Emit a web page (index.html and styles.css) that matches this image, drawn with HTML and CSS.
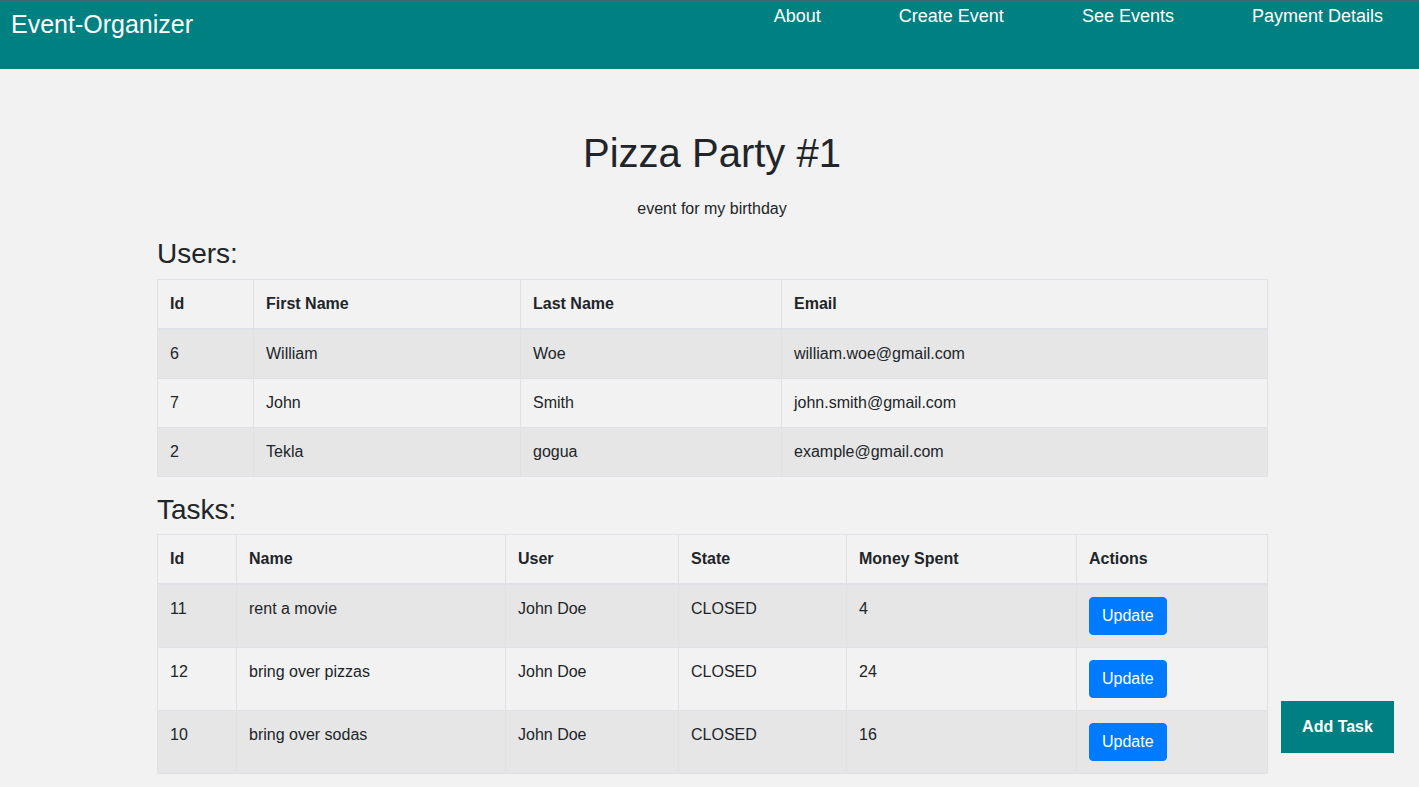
FILE: index.html
```html
<!DOCTYPE html>
<html lang="en">
<head>
<meta charset="utf-8">
<title>Event-Organizer</title>
<link rel="stylesheet" href="styles.css">
</head>
<body>
<header class="navbar">
  <div class="brand">Event-Organizer</div>
  <nav class="nav">
    <a class="nav-link" href="#">About</a>
    <a class="nav-link" href="#">Create Event</a>
    <a class="nav-link" href="#">See Events</a>
    <a class="nav-link" href="#">Payment Details</a>
  </nav>
</header>
<main class="container">
  <h1 class="title">Pizza Party #1</h1>
  <p class="subtitle">event for my birthday</p>

  <h3 class="section">Users:</h3>
  <table class="table">
    <colgroup>
      <col class="u1"><col class="u2"><col class="u3"><col class="u4">
    </colgroup>
    <thead>
      <tr><th>Id</th><th>First Name</th><th>Last Name</th><th>Email</th></tr>
    </thead>
    <tbody>
      <tr><td>6</td><td>William</td><td>Woe</td><td>william.woe@gmail.com</td></tr>
      <tr><td>7</td><td>John</td><td>Smith</td><td>john.smith@gmail.com</td></tr>
      <tr><td>2</td><td>Tekla</td><td>gogua</td><td>example@gmail.com</td></tr>
    </tbody>
  </table>

  <h3 class="section">Tasks:</h3>
  <table class="table">
    <colgroup>
      <col class="t1"><col class="t2"><col class="t3"><col class="t4"><col class="t5"><col class="t6">
    </colgroup>
    <thead>
      <tr><th>Id</th><th>Name</th><th>User</th><th>State</th><th>Money Spent</th><th>Actions</th></tr>
    </thead>
    <tbody>
      <tr><td>11</td><td>rent a movie</td><td>John Doe</td><td>CLOSED</td><td>4</td><td><button class="btn">Update</button></td></tr>
      <tr><td>12</td><td>bring over pizzas</td><td>John Doe</td><td>CLOSED</td><td>24</td><td><button class="btn">Update</button></td></tr>
      <tr><td>10</td><td>bring over sodas</td><td>John Doe</td><td>CLOSED</td><td>16</td><td><button class="btn">Update</button></td></tr>
    </tbody>
  </table>
</main>
<button class="add-task">Add Task</button>
</body>
</html>
```
FILE: styles.css
```css
* { box-sizing: border-box; }
html, body { margin: 0; padding: 0; }
body {
  background: #f2f2f2;
  color: #212529;
  font-family: "Liberation Sans", Arial, sans-serif;
  font-size: 16px;
  line-height: 1.5;
}
.navbar {
  display: flex;
  justify-content: space-between;
  align-items: flex-start;
  height: 69px;
  background: #008080;
  border-top: 1px solid #3b6a6a;
}
.brand {
  color: #fff;
  font-size: 25px;
  line-height: 30px;
  margin: 8px 0 0 11px;
}
.nav {
  display: flex;
  gap: 78px;
  padding-right: 36px;
  margin-top: 4px;
}
.nav-link {
  color: #fff;
  text-decoration: none;
  font-size: 18px;
  line-height: 22px;
}
.container {
  width: 1110px;
  margin: 0 0 0 157px;
  padding-bottom: 40px;
}
.title {
  margin: 60px 0 20px;
  font-size: 40px;
  font-weight: 500;
  line-height: 48px;
  text-align: center;
}
.subtitle {
  margin: 0 0 16px;
  text-align: center;
}
.section {
  margin: 0 0 8px;
  font-size: 28px;
  font-weight: 500;
  line-height: 33.6px;
}
.table {
  width: 100%;
  table-layout: fixed;
  border-collapse: collapse;
  margin-bottom: 16px;
  border: 1px solid #dee2e6;
}
.table th, .table td {
  padding: 12px;
  border: 1px solid #dee2e6;
  vertical-align: top;
  text-align: left;
}
.table th { font-weight: 700; }
.table thead th { border-bottom: 2px solid #dee2e6; }
.table tbody tr:nth-child(odd) { background: #e6e6e6; }
.u1 { width: 96px; }
.u2 { width: 267px; }
.u3 { width: 261px; }
.u4 { width: 486px; }
.t1 { width: 79px; }
.t2 { width: 269px; }
.t3 { width: 173px; }
.t4 { width: 168px; }
.t5 { width: 230px; }
.t6 { width: 191px; }
.btn {
  display: block;
  background: #007bff;
  color: #fff;
  border: 1px solid #007bff;
  border-radius: 4px;
  font-family: inherit;
  font-size: 16px;
  line-height: 24px;
  padding: 6px 12px;
  cursor: pointer;
}
.add-task {
  position: fixed;
  right: 25px;
  bottom: 34px;
  width: 113px;
  height: 52px;
  background: #008080;
  color: #fff;
  border: none;
  font-family: inherit;
  font-size: 16px;
  font-weight: 700;
  cursor: pointer;
}
```
